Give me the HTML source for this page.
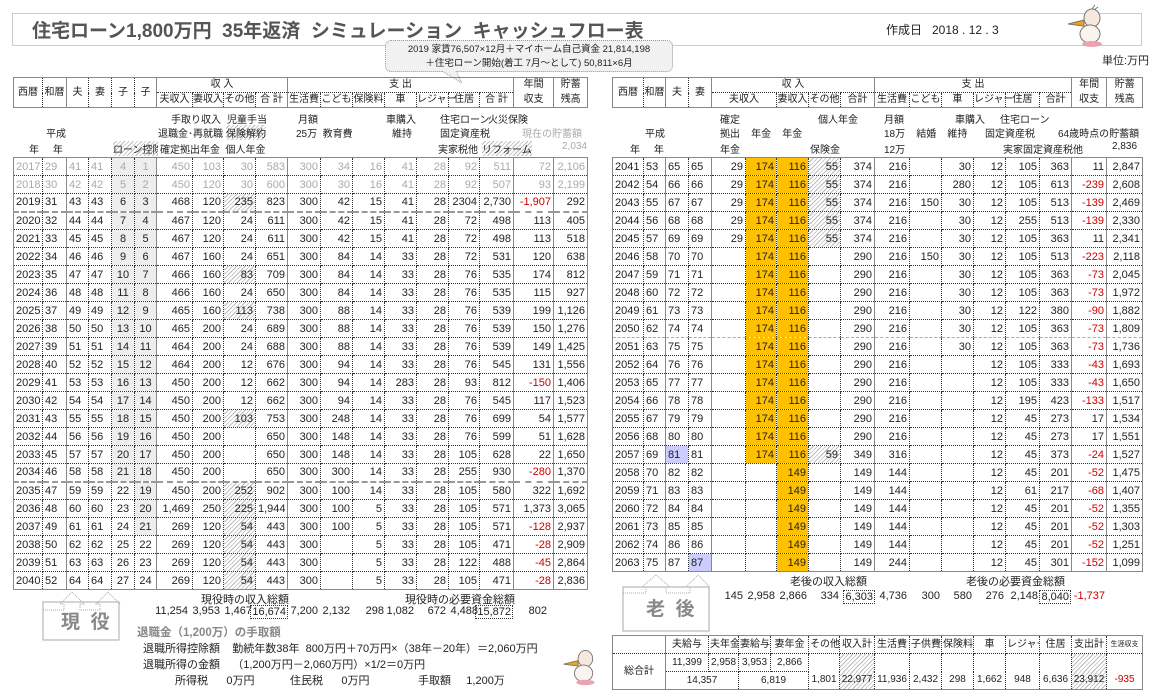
<!DOCTYPE html>
<html><head><meta charset="utf-8">
<style>
*{box-sizing:border-box;margin:0;padding:0}
body{width:1155px;height:699px;background:#fff;position:relative;overflow:hidden;font-family:"Liberation Sans","Noto Sans CJK JP",sans-serif;font-size:11px;color:#222}
.a{position:absolute;white-space:nowrap}
.an{font-size:10px}
table{border-collapse:collapse;table-layout:fixed;position:absolute}
td{border-right:1px dotted #333;border-bottom:1px dotted #333;text-align:right;padding:0 2px;height:18px;line-height:16px;overflow:hidden;white-space:nowrap;font-size:11px}
.dt td:nth-child(1),.dt td:nth-child(2),.dt td:nth-child(3),.dt td:nth-child(4){text-align:left}
#L td:nth-child(5),#L td:nth-child(6){text-align:center}
#L{left:13px;top:157px;width:574px;border:1px solid #888}
#R{left:612px;top:157px;width:530px;border:1px solid #888}
#L td:nth-child(2),#L td:nth-child(6),#L td:nth-child(10),#L td:nth-child(17),#L td:nth-child(18){border-right:1px solid #888}
#R td:nth-child(2),#R td:nth-child(4),#R td:nth-child(9),#R td:nth-child(15),#R td:nth-child(16){border-right:1px solid #888}
#L tr:nth-child(-n+18) td:nth-child(5),#L tr:nth-child(-n+21) td:nth-child(6){background:#eee}
#L tr:nth-child(-n+2) td{color:#aaa}
#L tr:nth-child(3) td,#L tr:nth-child(18) td{border-bottom:2px dashed #999}
#R tr:nth-child(-n+17) td:nth-child(6),#R td:nth-child(7){background:#ffc000}
#R tr:nth-child(10) td{border-bottom:1px dashed #aaa}
.h{background:repeating-linear-gradient(135deg,#fff 0 2px,#bbb 2px 3px)!important}
.n{color:#c00}
.b{background:#ccf!important}
.hd{border:1px solid #888}
.hd td{text-align:center;height:15px;line-height:14px;font-size:10px;padding:0;overflow:visible}
.tip{left:385px;top:40px;width:288px;height:32px;background:#f1f1f1;border:1px dotted #999;border-radius:6px;font-size:9.5px;line-height:14px;text-align:center;padding-top:2px}
.bx{border:1px dotted #333;padding:0 1px}
.tt td{text-align:center;font-size:10px;padding:0 1px}
</style></head><body>

<div class="a" style="left:12px;top:13px;width:1130px;height:33px;border:1px solid #ccc"></div>
<div class="a" style="left:32px;top:16px;font-size:19px;font-weight:bold;color:#555">住宅ローン1,800万円&nbsp; 35年返済&nbsp; シミュレーション&nbsp; キャッシュフロー表</div>
<div class="a" style="left:886px;top:21px;font-size:12px">作成日&nbsp;&nbsp; 2018 . 12 . 3</div>
<svg class="a" style="left:1062px;top:4px" width="46" height="44" viewBox="0 0 46 44"><ellipse cx="30" cy="14" rx="8" ry="9" fill="#f6e8df" stroke="#777"/><path d="M22 16 L6 20 L22 22Z" fill="#e8a030" stroke="#875"/><ellipse cx="28" cy="30" rx="10" ry="9" fill="#fbf3ee" stroke="#777"/><ellipse cx="30" cy="40" rx="10" ry="3" fill="#e9a3b0"/><path d="M30 5 L33 1 M32 6 L36 3" stroke="#777"/></svg>
<div class="a" style="left:1102px;top:52px;font-size:11px">単位:万円</div>

<div class="a tip">2019 家賃76,507×12月＋マイホーム自己資金 21,814,198<br>＋住宅ローン開始(着工 7月～として) 50,811×6月</div>
<svg class="a" style="left:440px;top:71px" width="40" height="14"><path d="M2 0 L22 12 L16 0" fill="#f1f1f1" stroke="#999" stroke-dasharray="1 1"/></svg>

<table class="hd" style="left:13px;top:77px;width:574px">
<colgroup><col style="width:29px"><col style="width:24px"><col style="width:22px"><col style="width:23px"><col style="width:23px"><col style="width:22px"><col style="width:36px"><col style="width:31px"><col style="width:32px"><col style="width:32px"><col style="width:33px"><col style="width:32px"><col style="width:32px"><col style="width:32px"><col style="width:32px"><col style="width:31px"><col style="width:34px"><col style="width:40px"><col style="width:34px"></colgroup>
<tr><td rowspan=2>西暦</td><td rowspan=2 style="border-right:1px solid #888">和暦</td><td rowspan=2>夫</td><td rowspan=2>妻</td><td rowspan=2>子</td><td rowspan=2 style="border-right:1px solid #888">子</td><td colspan=4 style="border-right:1px solid #888">収 入</td><td colspan=7 style="border-right:1px solid #888">支 出</td><td style="border-right:1px solid #888;border-bottom:0">年間</td><td style="border-bottom:0">貯蓄</td></tr>
<tr><td>夫収入</td><td>妻収入</td><td>その他</td><td style="border-right:1px solid #888">合 計</td><td>生活費</td><td>こども</td><td>保険料</td><td>車</td><td>レジャー</td><td>住居</td><td style="border-right:1px solid #888">合 計</td><td style="border-right:1px solid #888">収支</td><td>残高</td></tr>
</table>
<table class="hd" style="left:612px;top:77px;width:530px">
<colgroup><col style="width:31px"><col style="width:22px"><col style="width:23px"><col style="width:23px"><col style="width:34px"><col style="width:31px"><col style="width:32px"><col style="width:32px"><col style="width:34px"><col style="width:35px"><col style="width:32px"><col style="width:32px"><col style="width:32px"><col style="width:34px"><col style="width:32px"><col style="width:35px"><col style="width:36px"></colgroup>
<tr><td rowspan=2>西暦</td><td rowspan=2 style="border-right:1px solid #888">和暦</td><td rowspan=2>夫</td><td rowspan=2 style="border-right:1px solid #888">妻</td><td colspan=5 style="border-right:1px solid #888">収 入</td><td colspan=6 style="border-right:1px solid #888">支 出</td><td style="border-right:1px solid #888;border-bottom:0">年間</td><td style="border-bottom:0">貯蓄</td></tr>
<tr><td colspan=2>夫収入</td><td>妻収入</td><td>その他</td><td style="border-right:1px solid #888">合計</td><td>生活費</td><td>こども</td><td>車</td><td>レジャー</td><td>住居</td><td style="border-right:1px solid #888">合計</td><td style="border-right:1px solid #888">収支</td><td>残高</td></tr>
</table>

<div class="a an" style="left:171px;top:111px">手取り収入</div><div class="a an" style="left:227px;top:111px">児童手当</div><div class="a an" style="left:298px;top:111px">月額</div><div class="a an" style="left:386px;top:111px">車購入</div><div class="a an" style="left:440px;top:111px">住宅ローン</div><div class="a an" style="left:488px;top:111px">火災保険</div>
<div class="a an" style="left:46px;top:125px">平成</div><div class="a an" style="left:158px;top:125px">退職金･再就職</div><div class="a an h" style="left:226px;top:125px">保険解約</div><div class="a an" style="left:296px;top:125px">25万&nbsp; 教育費</div><div class="a an" style="left:392px;top:125px">維持</div><div class="a an" style="left:440px;top:125px">固定資産税</div><div class="a an" style="left:522px;top:125px;color:#aaa">現在の貯蓄額</div>
<div class="a an" style="left:29px;top:141px">年&nbsp;&nbsp;&nbsp;&nbsp; 年</div><div class="a an h" style="left:113px;top:141px;width:45px;overflow:hidden">ローン控除</div><div class="a an" style="left:160px;top:141px">確定拠出年金&nbsp; 個人年金</div><div class="a an" style="left:438px;top:141px">実家税他</div><div class="a an h" style="left:482px;top:141px">リフォーム</div><div class="a an" style="left:562px;top:141px;color:#aaa">2,034</div>

<div class="a an" style="left:720px;top:111px">確定</div><div class="a an" style="left:818px;top:111px">個人年金</div><div class="a an" style="left:884px;top:111px">月額</div><div class="a an" style="left:955px;top:111px">車購入</div><div class="a an" style="left:1000px;top:111px">住宅ローン</div>
<div class="a an" style="left:645px;top:125px">平成</div><div class="a an" style="left:720px;top:125px">拠出&nbsp;&nbsp;&nbsp; 年金&nbsp;&nbsp;&nbsp; 年金</div><div class="a an" style="left:884px;top:125px">18万&nbsp;&nbsp;&nbsp; 結婚&nbsp;&nbsp;&nbsp; 維持</div><div class="a an" style="left:985px;top:125px">固定資産税</div><div class="a an" style="left:1058px;top:125px">64歳時点の貯蓄額</div>
<div class="a an" style="left:630px;top:141px">年&nbsp;&nbsp;&nbsp;&nbsp; 年</div><div class="a an" style="left:720px;top:141px">年金</div><div class="a an" style="left:810px;top:141px">保険金</div><div class="a an" style="left:884px;top:141px">12万</div><div class="a an" style="left:1003px;top:141px">実家固定資産税他</div><div class="a an" style="left:1112px;top:141px">2,836</div>

<table id="L" class="dt">
<colgroup><col style="width:29px"><col style="width:24px"><col style="width:22px"><col style="width:23px"><col style="width:23px"><col style="width:22px"><col style="width:36px"><col style="width:31px"><col style="width:32px"><col style="width:32px"><col style="width:33px"><col style="width:32px"><col style="width:32px"><col style="width:32px"><col style="width:32px"><col style="width:31px"><col style="width:34px"><col style="width:40px"><col style="width:34px"></colgroup>
<tr><td>2017<td>29<td>41<td>41<td>4<td>1<td>450<td>103<td>30<td>583<td>300<td>34<td>16<td>41<td>28<td>92<td>511<td>72<td>2,106
<tr><td>2018<td>30<td>42<td>42<td>5<td>2<td>450<td>120<td>30<td>600<td>300<td>30<td>16<td>41<td>28<td>92<td>507<td>93<td>2,199
<tr><td>2019<td>31<td>43<td>43<td>6<td>3<td>468<td>120<td class=h>235<td>823<td>300<td>42<td>15<td>41<td>28<td>2304<td>2,730<td class=n>-1,907<td>292
<tr><td>2020<td>32<td>44<td>44<td>7<td>4<td>467<td>120<td>24<td>611<td>300<td>42<td>15<td>41<td>28<td>72<td>498<td>113<td>405
<tr><td>2021<td>33<td>45<td>45<td>8<td>5<td>467<td>120<td>24<td>611<td>300<td>42<td>15<td>41<td>28<td>72<td>498<td>113<td>518
<tr><td>2022<td>34<td>46<td>46<td>9<td>6<td>467<td>160<td>24<td>651<td>300<td>84<td>14<td>33<td>28<td>72<td>531<td>120<td>638
<tr><td>2023<td>35<td>47<td>47<td>10<td>7<td>466<td>160<td class=h>83<td>709<td>300<td>84<td>14<td>33<td>28<td>76<td>535<td>174<td>812
<tr><td>2024<td>36<td>48<td>48<td>11<td>8<td>466<td>160<td>24<td>650<td>300<td>84<td>14<td>33<td>28<td>76<td>535<td>115<td>927
<tr><td>2025<td>37<td>49<td>49<td>12<td>9<td>465<td>160<td class=h>113<td>738<td>300<td>88<td>14<td>33<td>28<td>76<td>539<td>199<td>1,126
<tr><td>2026<td>38<td>50<td>50<td>13<td>10<td>465<td>200<td>24<td>689<td>300<td>88<td>14<td>33<td>28<td>76<td>539<td>150<td>1,276
<tr><td>2027<td>39<td>51<td>51<td>14<td>11<td>464<td>200<td>24<td>688<td>300<td>88<td>14<td>33<td>28<td>76<td>539<td>149<td>1,425
<tr><td>2028<td>40<td>52<td>52<td>15<td>12<td>464<td>200<td>12<td>676<td>300<td>94<td>14<td>33<td>28<td>76<td>545<td>131<td>1,556
<tr><td>2029<td>41<td>53<td>53<td>16<td>13<td>450<td>200<td>12<td>662<td>300<td>94<td>14<td>283<td>28<td>93<td>812<td class=n>-150<td>1,406
<tr><td>2030<td>42<td>54<td>54<td>17<td>14<td>450<td>200<td>12<td>662<td>300<td>94<td>14<td>33<td>28<td>76<td>545<td>117<td>1,523
<tr><td>2031<td>43<td>55<td>55<td>18<td>15<td>450<td>200<td class=h>103<td>753<td>300<td>248<td>14<td>33<td>28<td>76<td>699<td>54<td>1,577
<tr><td>2032<td>44<td>56<td>56<td>19<td>16<td>450<td>200<td><td>650<td>300<td>148<td>14<td>33<td>28<td>76<td>599<td>51<td>1,628
<tr><td>2033<td>45<td>57<td>57<td>20<td>17<td>450<td>200<td><td>650<td>300<td>148<td>14<td>33<td>28<td>105<td>628<td>22<td>1,650
<tr><td>2034<td>46<td>58<td>58<td>21<td>18<td>450<td>200<td><td>650<td>300<td>300<td>14<td>33<td>28<td>255<td>930<td class=n>-280<td>1,370
<tr><td>2035<td>47<td>59<td>59<td>22<td>19<td>450<td>200<td class=h>252<td>902<td>300<td>100<td>14<td>33<td>28<td>105<td>580<td>322<td>1,692
<tr><td>2036<td>48<td>60<td>60<td>23<td>20<td>1,469<td>250<td class=h>225<td>1,944<td>300<td>100<td>5<td>33<td>28<td>105<td>571<td>1,373<td>3,065
<tr><td>2037<td>49<td>61<td>61<td>24<td>21<td>269<td>120<td class=h>54<td>443<td>300<td>100<td>5<td>33<td>28<td>105<td>571<td class=n>-128<td>2,937
<tr><td>2038<td>50<td>62<td>62<td>25<td>22<td>269<td>120<td class=h>54<td>443<td>300<td><td>5<td>33<td>28<td>105<td>471<td class=n>-28<td>2,909
<tr><td>2039<td>51<td>63<td>63<td>26<td>23<td>269<td>120<td class=h>54<td>443<td>300<td><td>5<td>33<td>28<td>122<td>488<td class=n>-45<td>2,864
<tr><td>2040<td>52<td>64<td>64<td>27<td>24<td>269<td>120<td class=h>54<td>443<td>300<td><td>5<td>33<td>28<td>105<td>471<td class=n>-28<td>2,836
</table>

<table id="R" class="dt">
<colgroup><col style="width:31px"><col style="width:22px"><col style="width:23px"><col style="width:23px"><col style="width:34px"><col style="width:31px"><col style="width:32px"><col style="width:32px"><col style="width:34px"><col style="width:35px"><col style="width:32px"><col style="width:32px"><col style="width:32px"><col style="width:34px"><col style="width:32px"><col style="width:35px"><col style="width:36px"></colgroup>
<tr><td>2041<td>53<td>65<td>65<td style="text-align:right">29<td>174<td>116<td class=h>55<td>374<td>216<td><td>30<td>12<td>105<td>363<td>11<td>2,847
<tr><td>2042<td>54<td>66<td>66<td style="text-align:right">29<td>174<td>116<td class=h>55<td>374<td>216<td><td>280<td>12<td>105<td>613<td class=n>-239<td>2,608
<tr><td>2043<td>55<td>67<td>67<td style="text-align:right">29<td>174<td>116<td class=h>55<td>374<td>216<td>150<td>30<td>12<td>105<td>513<td class=n>-139<td>2,469
<tr><td>2044<td>56<td>68<td>68<td style="text-align:right">29<td>174<td>116<td class=h>55<td>374<td>216<td><td>30<td>12<td>255<td>513<td class=n>-139<td>2,330
<tr><td>2045<td>57<td>69<td>69<td style="text-align:right">29<td>174<td>116<td class=h>55<td>374<td>216<td><td>30<td>12<td>105<td>363<td>11<td>2,341
<tr><td>2046<td>58<td>70<td>70<td><td>174<td>116<td><td>290<td>216<td>150<td>30<td>12<td>105<td>513<td class=n>-223<td>2,118
<tr><td>2047<td>59<td>71<td>71<td><td>174<td>116<td><td>290<td>216<td><td>30<td>12<td>105<td>363<td class=n>-73<td>2,045
<tr><td>2048<td>60<td>72<td>72<td><td>174<td>116<td><td>290<td>216<td><td>30<td>12<td>105<td>363<td class=n>-73<td>1,972
<tr><td>2049<td>61<td>73<td>73<td><td>174<td>116<td><td>290<td>216<td><td>30<td>12<td>122<td>380<td class=n>-90<td>1,882
<tr><td>2050<td>62<td>74<td>74<td><td>174<td>116<td><td>290<td>216<td><td>30<td>12<td>105<td>363<td class=n>-73<td>1,809
<tr><td>2051<td>63<td>75<td>75<td><td>174<td>116<td><td>290<td>216<td><td>30<td>12<td>105<td>363<td class=n>-73<td>1,736
<tr><td>2052<td>64<td>76<td>76<td><td>174<td>116<td><td>290<td>216<td><td><td>12<td>105<td>333<td class=n>-43<td>1,693
<tr><td>2053<td>65<td>77<td>77<td><td>174<td>116<td><td>290<td>216<td><td><td>12<td>105<td>333<td class=n>-43<td>1,650
<tr><td>2054<td>66<td>78<td>78<td><td>174<td>116<td><td>290<td>216<td><td><td>12<td>195<td>423<td class=n>-133<td>1,517
<tr><td>2055<td>67<td>79<td>79<td><td>174<td>116<td><td>290<td>216<td><td><td>12<td>45<td>273<td>17<td>1,534
<tr><td>2056<td>68<td>80<td>80<td><td>174<td>116<td><td>290<td>216<td><td><td>12<td>45<td>273<td>17<td>1,551
<tr><td>2057<td>69<td class=b>81<td>81<td><td>174<td>116<td class=h>59<td>349<td>316<td><td><td>12<td>45<td>373<td class=n>-24<td>1,527
<tr><td>2058<td>70<td>82<td>82<td><td><td>149<td><td>149<td>144<td><td><td>12<td>45<td>201<td class=n>-52<td>1,475
<tr><td>2059<td>71<td>83<td>83<td><td><td>149<td><td>149<td>144<td><td><td>12<td>61<td>217<td class=n>-68<td>1,407
<tr><td>2060<td>72<td>84<td>84<td><td><td>149<td><td>149<td>144<td><td><td>12<td>45<td>201<td class=n>-52<td>1,355
<tr><td>2061<td>73<td>85<td>85<td><td><td>149<td><td>149<td>144<td><td><td>12<td>45<td>201<td class=n>-52<td>1,303
<tr><td>2062<td>74<td>86<td>86<td><td><td>149<td><td>149<td>144<td><td><td>12<td>45<td>201<td class=n>-52<td>1,251
<tr><td>2063<td>75<td>87<td class=b>87<td><td><td>149<td><td>149<td>244<td><td><td>12<td>45<td>301<td class=n>-152<td>1,099
</table>

<svg class="a" style="left:42px;top:590px" width="80" height="52"><path d="M1 50 V20 H22 V14 H18 L30 2 L42 14 H38 V20 H58 V14 H54 L66 2 L78 14" fill="none" stroke="#aaa" stroke-dasharray="1 1"/><rect x="1" y="12" width="76" height="38" fill="none" stroke="#aaa"/></svg>
<div class="a" style="left:61px;top:607px;font-size:19px;font-weight:bold;color:#888">現&nbsp; 役</div>
<div class="a" style="left:201px;top:591px">現役時の収入総額</div>
<div class="a" style="left:405px;top:591px">現役時の必要資金総額</div>
<div class="a" style="left:0;top:605px;width:600px;height:16px">
<span class="a" style="right:412px">11,254</span><span class="a" style="right:380px">3,953</span><span class="a" style="right:348px">1,467</span><span class="a bx" style="right:312px">16,674</span><span class="a" style="right:282px">7,200</span><span class="a" style="right:250px">2,132</span><span class="a" style="right:216px">298</span><span class="a" style="right:186px">1,082</span><span class="a" style="right:154px">672</span><span class="a" style="right:122px">4,488</span><span class="a bx" style="right:87px">15,872</span><span class="a" style="right:53px">802</span></div>
<div class="a" style="left:137px;top:624px;font-weight:bold;color:#888;font-size:11.5px">退職金（1,200万）の手取額</div>
<div class="a" style="left:143px;top:640px">退職所得控除額&nbsp;&nbsp;&nbsp; 勤続年数38年&nbsp; 800万円＋70万円×（38年－20年）＝2,060万円</div>
<div class="a" style="left:143px;top:656px">退職所得の金額&nbsp;&nbsp;&nbsp; （1,200万円－2,060万円）×1/2＝0万円</div>
<div class="a" style="left:175px;top:672px">所得税&nbsp;&nbsp;&nbsp;&nbsp;&nbsp; 0万円</div>
<div class="a" style="left:290px;top:672px">住民税&nbsp;&nbsp;&nbsp;&nbsp;&nbsp; 0万円</div>
<div class="a" style="left:418px;top:672px">手取額&nbsp;&nbsp;&nbsp;&nbsp; 1,200万</div>
<svg class="a" style="left:558px;top:642px" width="42" height="48" viewBox="0 0 46 44"><ellipse cx="30" cy="14" rx="8" ry="9" fill="#f6e8df" stroke="#777"/><path d="M22 16 L6 20 L22 22Z" fill="#e8a030" stroke="#875"/><ellipse cx="28" cy="30" rx="10" ry="9" fill="#fbf3ee" stroke="#777"/><ellipse cx="30" cy="40" rx="10" ry="3" fill="#e9a3b0"/></svg>

<svg class="a" style="left:622px;top:573px" width="90" height="60"><path d="M1 58 V20 H24 V14 H20 L34 2 L48 14 H44 V20 H68 V14 H64 L76 2 L88 14" fill="none" stroke="#aaa" stroke-dasharray="1 1"/><rect x="1" y="14" width="86" height="44" fill="none" stroke="#aaa"/></svg>
<div class="a" style="left:646px;top:594px;font-size:19px;font-weight:bold;color:#888">老&nbsp; 後</div>
<div class="a" style="left:790px;top:573px">老後の収入総額</div>
<div class="a" style="left:966px;top:573px">老後の必要資金総額</div>
<div class="a" style="left:600px;top:590px;width:555px;height:16px">
<span class="a" style="right:412px">145</span><span class="a" style="right:380px">2,958</span><span class="a" style="right:348px">2,866</span><span class="a" style="right:316px">334</span><span class="a bx" style="right:280px">6,303</span><span class="a" style="right:248px">4,736</span><span class="a" style="right:215px">300</span><span class="a" style="right:183px">580</span><span class="a" style="right:151px">276</span><span class="a" style="right:117px">2,148</span><span class="a bx" style="right:84px">8,040</span><span class="a n" style="right:50px">-1,737</span></div>

<table class="tt" style="left:612px;top:635px;width:530px;border:1px solid #888">
<colgroup><col style="width:53px"><col style="width:43px"><col style="width:30px"><col style="width:32px"><col style="width:38px"><col style="width:31px"><col style="width:35px"><col style="width:35px"><col style="width:32px"><col style="width:32px"><col style="width:32px"><col style="width:34px"><col style="width:32px"><col style="width:35px"><col style="width:36px"></colgroup>
<tr><td style="border-right:1px solid #888"></td><td>夫給与</td><td>夫年金</td><td>妻給与</td><td>妻年金</td><td>その他</td><td>収入計</td><td>生活費</td><td>子供費</td><td>保険料</td><td>車</td><td>レジャー</td><td>住居</td><td>支出計</td><td style="font-size:7px">生涯収支</td></tr>
<tr><td rowspan=2 style="border-right:1px solid #888;border-bottom:0">総合計</td><td>11,399</td><td>2,958</td><td>3,953</td><td>2,866</td><td style="border-bottom:0"></td><td class=h style="border-bottom:0"></td><td style="border-bottom:0"></td><td style="border-bottom:0"></td><td style="border-bottom:0"></td><td style="border-bottom:0"></td><td style="border-bottom:0"></td><td style="border-bottom:0"></td><td class=h style="border-bottom:0"></td><td style="border-bottom:0"></td></tr>
<tr><td colspan=2>14,357</td><td colspan=2>6,819</td><td>1,801</td><td class=h>22,977</td><td>11,936</td><td>2,432</td><td>298</td><td>1,662</td><td>948</td><td>6,636</td><td class=h>23,912</td><td class=n>-935</td></tr>
</table>
</body></html>
